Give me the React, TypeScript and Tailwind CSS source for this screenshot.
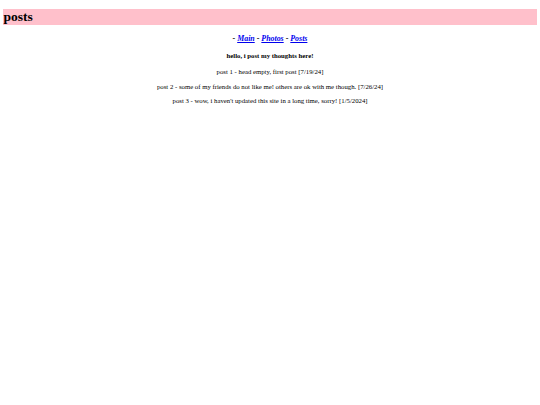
export default function App() {
  return (
    <div className="min-h-screen bg-white px-[3.4px] text-black font-['Liberation_Serif','Times_New_Roman',serif]">
      <div className="h-px -mb-px" />
      <h1 className="mt-[9px] mb-[9px] bg-[#ffc0cb] text-[13.5px] font-bold leading-[1.15]">posts</h1>
      <h3 className="my-[9px] text-center text-[7.9px] font-bold leading-[1.15]">
        - <a href="#" className="italic text-[#0000ee] underline">Main</a> -{" "}
        <a href="#" className="italic text-[#0000ee] underline">Photos</a> -{" "}
        <a href="#" className="italic text-[#0000ee] underline">Posts</a>
      </h3>
      <h4 className="my-[9px] text-center text-[6.75px] font-bold leading-[1.15]">hello, i post my thoughts here!</h4>
      <div className="text-center text-[6.75px] leading-[1.15]">
        <p className="my-[6.75px]">post 1 - head empty, first post [7/19/24]</p>
        <p className="my-[6.75px]">post 2 - some of my friends do not like me! others are ok with me though. [7/26/24]</p>
        <p className="my-[6.75px]">post 3 - wow, i haven't updated this site in a long time, sorry! [1/5/2024]</p>
      </div>
    </div>
  );
}
